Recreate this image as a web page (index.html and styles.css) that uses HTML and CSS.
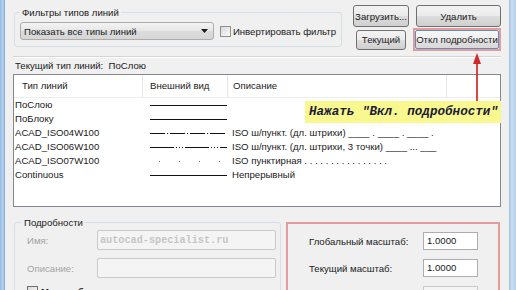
FILE: index.html
```html
<!DOCTYPE html>
<html lang="ru">
<head>
    <meta charset="UTF-8">
    <title>Диспетчер типов линий</title>
    <link rel="stylesheet" href="styles.css">
</head>
<body>
    <div class="window">
        <div class="frame frame-left"></div>

        <div class="dialog">
            <!-- верхняя часть: фильтры и кнопки -->
            <div class="top">
                <fieldset class="group filters">
                    <legend>Фильтры типов линий</legend>
                    <div class="filter-row">
                        <div class="combo">
                            <span>Показать все типы линий</span>
                            <svg width="7" height="4" viewBox="0 0 7 4"><path d="M0,0 L7,0 L3.5,4 Z" fill="#1a1a1a"/></svg>
                        </div>
                        <label class="check"><span class="box"></span>Инвертировать фильтр</label>
                    </div>
                </fieldset>

                <div class="buttons">
                    <button class="btn">Загрузить...</button>
                    <button class="btn btn-delete">Удалить</button>
                    <button class="btn btn-current">Текущий</button>
                    <div class="highlight"><button class="btn btn-focus">Откл подробности</button></div>
                </div>
            </div>

            <div class="separator"></div>
            <div class="current">Текущий тип линий:&nbsp; ПоСлою</div>

            <!-- список типов линий -->
            <div class="list">
                <div class="list-head">
                    <div class="col">Тип линий</div>
                    <div class="col col-look">Внешний вид</div>
                    <div class="col col-desc">Описание</div>
                    <div class="col col-last"></div>
                </div>

                <div class="row">
                    <div class="name">ПоСлою</div>
                    <div class="look"><svg width="77" height="14"><line x1="0" y1="7.5" x2="77" y2="7.5" stroke="#111" stroke-width="1"/></svg></div>
                    <div class="desc"></div>
                </div>
                <div class="row">
                    <div class="name">ПоБлоку</div>
                    <div class="look"><svg width="77" height="14"><line x1="0" y1="7.5" x2="77" y2="7.5" stroke="#111" stroke-width="1"/></svg></div>
                    <div class="desc"></div>
                </div>
                <div class="row">
                    <div class="name">ACAD_ISO04W100</div>
                    <div class="look"><svg width="77" height="14"><line x1="0" y1="7.5" x2="77" y2="7.5" stroke="#111" stroke-width="1" stroke-dasharray="15 2 1 2"/></svg></div>
                    <div class="desc">ISO ш/пункт. (дл. штрихи) ____ . ____ . ____ .</div>
                </div>
                <div class="row">
                    <div class="name">ACAD_ISO06W100</div>
                    <div class="look"><svg width="77" height="14"><line x1="0" y1="7.5" x2="77" y2="7.5" stroke="#111" stroke-width="1" stroke-dasharray="24 2 1 2 1 2 1 2"/></svg></div>
                    <div class="desc">ISO ш/пункт. (дл. штрихи, 3 точки) ____ ... ___</div>
                </div>
                <div class="row">
                    <div class="name">ACAD_ISO07W100</div>
                    <div class="look"><svg width="77" height="14"><line x1="9" y1="7.5" x2="77" y2="7.5" stroke="#666" stroke-width="1" stroke-dasharray="1 19"/></svg></div>
                    <div class="desc">ISO пунктирная . . . . . . . . . . . . . . . .</div>
                </div>
                <div class="row">
                    <div class="name">Continuous</div>
                    <div class="look"><svg width="77" height="14"><line x1="0" y1="7.5" x2="77" y2="7.5" stroke="#111" stroke-width="1"/></svg></div>
                    <div class="desc">Непрерывный</div>
                </div>

                <div class="note">Нажать "Вкл. подробности"</div>
            </div>

            <!-- подробности -->
            <div class="bottom">
                <fieldset class="group details">
                    <legend>Подробности</legend>
                    <div class="field">
                        <label>Имя:</label>
                        <div class="input-dis"><span class="mark">autocad-specialist.ru</span></div>
                    </div>
                    <div class="field">
                        <label>Описание:</label>
                        <div class="input-dis"></div>
                    </div>
                    <div class="check check-bold"><span class="box box-on"></span>Масштаб в единицах листа</div>
                </fieldset>

                <div class="scales">
                    <div class="scale-row">
                        <label>Глобальный масштаб:</label>
                        <div class="input">1.0000</div>
                    </div>
                    <div class="scale-row">
                        <label>Текущий масштаб:</label>
                        <div class="input">1.0000</div>
                    </div>
                    <div class="scale-row off">
                        <label>Толщина пера по ISO:</label>
                        <div class="input">1.0 мм</div>
                    </div>
                </div>
            </div>
        </div>

        <div class="frame frame-right"></div>

        <!-- стрелка-подсказка -->
        <svg class="arrow" width="10" height="48" viewBox="0 0 10 48">
            <path d="M5,0 L1,11 L9,11 Z" fill="#d3282a"/>
            <line x1="5" y1="10" x2="5" y2="48" stroke="#d3282a" stroke-width="1.7"/>
        </svg>
    </div>
</body>
</html>
```

FILE: styles.css
```css
/* общие */
* {
    box-sizing: border-box;
}
body {
    margin: 0;
    width: 516px;
    height: 290px;
    overflow: hidden;
    font-family: "Liberation Sans", Arial, sans-serif;
    font-size: 9.6px;
    color: #1a1a1a;
    background: #f0f0f0;
}
.window {
    position: relative;
    display: flex;
    height: 290px;
}
.frame-left {
    width: 5px;
    background: linear-gradient(to right, #93bbe2, #b7d3ef 60%, #7ea5cf);
}
.frame-right {
    width: 7px;
    background: linear-gradient(to right, #a3c0de, #c8def2 40%, #b6d0ea);
}
.dialog {
    flex: 1;
    padding: 0 8px;
    background: #f0f0f0;
    overflow: hidden;
}

/* группы */
.group {
    margin: 0;
    min-width: 0;
    border: 1px solid #d5dfe5;
    border-radius: 3px;
}
.group legend {
    padding: 0 2px;
    line-height: 13px;
}

/* верх */
.top {
    display: flex;
    height: 56px;
}
.filters {
    margin: 6px 0 0 1px;
    width: 328px;
    height: 41px;
    padding: 3px 5px 0 5px;
}
.filter-row {
    display: flex;
    align-items: center;
}
.combo {
    width: 200px;
    height: 18px;
    display: flex;
    align-items: center;
    justify-content: space-between;
    padding: 0 5px 0 3px;
    border: 1px solid #acacac;
    border-radius: 3px;
    background: linear-gradient(#f4f4f4, #e6e6e6 50%, #dcdcdc 51%, #d6d6d6);
}
.check {
    display: flex;
    align-items: center;
    gap: 2px;
    margin-left: 6px;
    white-space: nowrap;
}
.box {
    width: 11px;
    height: 11px;
    border: 1px solid #8e8f8f;
    background: linear-gradient(135deg, #d8d8d8, #fbfbfb);
}

/* кнопки */
.buttons {
    margin: 5px 0 0 auto;
    display: grid;
    grid-template-columns: 56px 88px;
    grid-template-rows: 22px 23px;
    column-gap: 4px;
    row-gap: 1px;
}
.btn {
    font: inherit;
    color: #1a1a1a;
    padding: 0;
    border: 1px solid #707070;
    border-radius: 3px;
    background: linear-gradient(#f3f3f3, #ebebeb 50%, #dddddd 51%, #cfcfcf);
    white-space: nowrap;
}
.btn-delete {
    margin-left: 3px;
}
.btn-current {
    width: 50px;
    height: 20px;
    justify-self: center;
    align-self: center;
}
.highlight {
    border: 2px solid #e39b9b;
    display: flex;
}
.btn-focus {
    flex: 1;
    border-color: #5f8fbf;
    border-radius: 2px;
    background: linear-gradient(#f7f7f7, #efefef 50%, #e3e3e3 51%, #d8d8d8);
}

.separator {
    height: 2px;
    border-top: 1px solid #d5d5d5;
    border-bottom: 1px solid #ffffff;
}
.current {
    height: 16px;
    line-height: 15px;
    padding-left: 2px;
}

/* список */
.list {
    position: relative;
    height: 133px;
    border: 1px solid #828790;
    background: #ffffff;
}
.list-head {
    display: grid;
    grid-template-columns: 129px 85px 219px 1fr;
    height: 23px;
    border-bottom: 1px solid #ededed;
}
.list-head .col {
    line-height: 22px;
    padding-left: 8px;
    border-right: 1px solid #e5e5e5;
}
.list-head .col-look {
    padding-left: 7px;
}
.list-head .col-desc {
    padding-left: 5px;
}
.list-head .col-last {
    border-right: none;
}
.row {
    display: grid;
    grid-template-columns: 129px 85px 1fr;
    height: 14px;
    line-height: 14px;
}
.row .name {
    padding-left: 1px;
}
.row .look {
    padding-left: 7px;
    display: flex;
}
.row .desc {
    padding-left: 4px;
    white-space: nowrap;
}
.note {
    position: absolute;
    left: 291px;
    top: 26px;
    width: 196px;
    height: 22px;
    line-height: 22px;
    padding-left: 4px;
    background: #f8f88e;
    color: #1b1b38;
    font-family: "Liberation Mono", "Courier New", monospace;
    font-size: 12.6px;
    font-weight: bold;
    font-style: italic;
    white-space: nowrap;
}
.arrow {
    position: absolute;
    left: 472px;
    top: 53px;
}

/* подробности */
.bottom {
    display: flex;
    align-items: flex-start;
}
.details {
    margin: 9px 0 0 1px;
    width: 267px;
    height: 90px;
    padding: 1px 0 0 7px;
}
.field {
    display: flex;
    align-items: center;
    height: 20px;
    margin-bottom: 8px;
    padding-left: 5px;
}
.field label {
    width: 70px;
    color: #a3a3a3;
}
.input-dis {
    width: 179px;
    height: 20px;
    padding-left: 2px;
    border: 1px solid #c9c9c9;
    border-radius: 2px;
    background: #f4f4f4;
    line-height: 18px;
}
.mark {
    font-family: "Liberation Mono", "Courier New", monospace;
    font-size: 10.2px;
    font-weight: bold;
    color: #c6c6c6;
}
.check-bold {
    margin-left: 5px;
    font-weight: bold;
    gap: 3px;
}
.box-on {
    border-color: #6f6f6f;
}

.scales {
    margin: 15px 0 0 5px;
    width: 214px;
    height: 80px;
    padding: 8px 0 0 21px;
    border: 2px solid #e39b9b;
}
.scale-row {
    display: flex;
    align-items: center;
    height: 18px;
    margin-bottom: 9px;
}
.scale-row label {
    width: 114px;
}
.input {
    width: 55px;
    height: 18px;
    padding-left: 3px;
    line-height: 16px;
    border: 1px solid #abadb3;
    background: #ffffff;
}
.scale-row.off label,
.scale-row.off .input {
    color: #a3a3a3;
}
.scale-row.off .input {
    border-color: #c9c9c9;
    background: #f4f4f4;
}
```
